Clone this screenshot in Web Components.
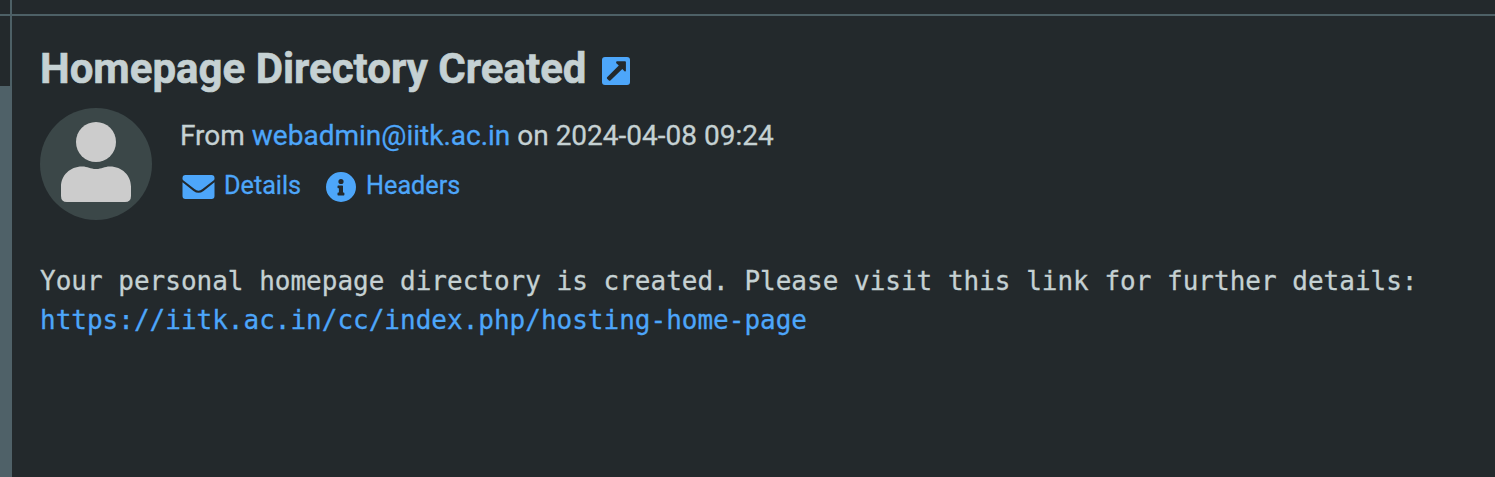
<!DOCTYPE html>
<html lang="en">
<head>
<meta charset="utf-8">
<title>Homepage Directory Created</title>
<style>
body { margin: 0; background: #23292c; overflow: hidden; }
</style>
</head>
<body>
<mail-view>
  <mail-subject slot="subject">Homepage Directory Created</mail-subject>
  <mail-summary slot="summary">
    <span>From <mail-link>webadmin@iitk.ac.in</mail-link> on 2024-04-08 09:24</span>
    <mail-action slot="actions" icon="envelope">Details</mail-action>
    <mail-action slot="actions" icon="info">Headers</mail-action>
  </mail-summary>
  <mail-body>Your personal homepage directory is created. Please visit this link for further details:
<mail-link>https://iitk.ac.in/cc/index.php/hosting-home-page</mail-link></mail-body>
</mail-view>
<script>
const define = (name, html, setup) => customElements.define(name, class extends HTMLElement {
  constructor() {
    super();
    this.attachShadow({ mode: 'open' }).innerHTML = html;
  }
  connectedCallback() { if (setup) setup(this); }
});

define('mail-view', `
<style>
:host { display: grid; grid-template-columns: 12px 1fr; grid-template-rows: 14px 2px 1fr; width: 100vw; height: 100vh; overflow: hidden;
  background: #23292c; color: #c5d1d3; font-family: Roboto, sans-serif; -webkit-text-stroke: .3px currentColor; --line: #4d6066; --link: #4da6fa; }
.edge { box-sizing: border-box; border-right: 2px solid var(--line); }
.rule { grid-column: 1 / 3; background: var(--line); }
.side { display: flex; flex-direction: column; }
.side .edge { height: 70px; }
.thumb { flex: 1; background: #4f6168; }
main { padding: 28px 28px 0; min-width: 0; }
</style>
<div class="edge"></div><div></div>
<div class="rule"></div>
<div class="side"><div class="edge"></div><div class="thumb"></div></div>
<main><slot name="subject"></slot><slot name="summary"></slot><slot></slot></main>`);

define('mail-subject', `
<style>
:host { display: flex; align-items: center; gap: 16px; height: 50px; font-size: 42px; line-height: 50px; font-weight: 700; white-space: nowrap; -webkit-text-stroke: .6px currentColor; }
svg { width: 28px; height: 28px; margin-top: 4px; flex: none; }
</style>
<span><slot></slot></span>
<svg viewBox="0 0 28 28"><rect width="28" height="28" rx="3" fill="#4da6fa"/><path d="M14.800 4.200H23q.9 0 .9.900v8.600q-.3 1.300-1.400.5L20.300 12 8.400 23.500q-.8.600-1.500 0l-1.800-1.800q-.6-.7 0-1.400L16.800 8.500l-2.500-2.200Q13.600 4.700 14.800 4.200z" fill="#23292c"/></svg>`);

define('mail-summary', `
<style>
:host { display: flex; gap: 28px; margin-top: 14px; font-size: 28px; line-height: 42px; white-space: nowrap; }
svg { width: 112px; height: 112px; flex: none; }
.info { padding-top: 7px; }
.actions { display: flex; gap: 24px; height: 42px; margin-top: 9px; }
</style>
<svg viewBox="0 0 112 112"><circle cx="56" cy="56" r="56" fill="#3b4748"/><circle cx="56" cy="34" r="20" fill="#ccc"/><path d="M42 58.500c6 0 8 2.500 14 2.500s8-2.500 14-2.500c12 0 21 9 21 20V88q0 6-6 6H27q-6 0-6-6V78.500c0-11 9-20 21-20z" fill="#ccc"/></svg>
<div class="info"><div><slot></slot></div><div class="actions"><slot name="actions"></slot></div></div>`);

define('mail-action', `
<style>
:host { display: flex; align-items: center; gap: 9px; color: var(--link); font-size: 25.2px; line-height: 38px; height: 38px; }
svg { flex: none; margin-top: 4px; }
span { padding-top: 2px; }
</style>
<svg></svg><span><slot></slot></span>`, el => {
  const icons = {
    envelope: ['0 0 35 32', '<path d="M5.500 4h26q3 0 3 3v.8q0 1-1 1.800L22.500 18q-4 3.400-8 0L3.500 9.600Q2.500 8.800 2.500 7.800V7q0-3 3-3zM2.500 11.300l11 8.600q5 3.800 10 0l11-8.600V25q0 3-3 3h-26q-3 0-3-3z"/>'],
    info: ['0 0 32 32', '<path fill-rule="evenodd" d="M16 1a15 15 0 1 0 0 30a15 15 0 1 0 0-30zm0 6.900a2.600 2.600 0 1 1 0 5.200a2.600 2.600 0 1 1 0-5.200zM13.200 14.500h4.100q.7 0 .7.700v6.400h.7q.7 0 .7.700v1.400q0 .7-.7.700h-5.500q-.7 0-.7-.7v-1.400q0-.7.7-.7h.7v-4.300h-.7q-.7 0-.7-.7v-1.400q0-.7.7-.7z"/>']
  };
  const [box, path] = icons[el.getAttribute('icon')];
  const svg = el.shadowRoot.querySelector('svg');
  svg.setAttribute('viewBox', box);
  svg.setAttribute('width', box.split(' ')[2]);
  svg.setAttribute('height', 32);
  svg.setAttribute('fill', 'currentColor');
  svg.innerHTML = path;
});

define('mail-link', `<style>:host { color: var(--link); -webkit-text-stroke-color: var(--link); }</style><slot></slot>`);

define('mail-body', `<style>:host { display: block; margin-top: 42px; font: 26px/39px "DejaVu Sans Mono", monospace; white-space: pre; }</style><slot></slot>`);
</script>
</body>
</html>
